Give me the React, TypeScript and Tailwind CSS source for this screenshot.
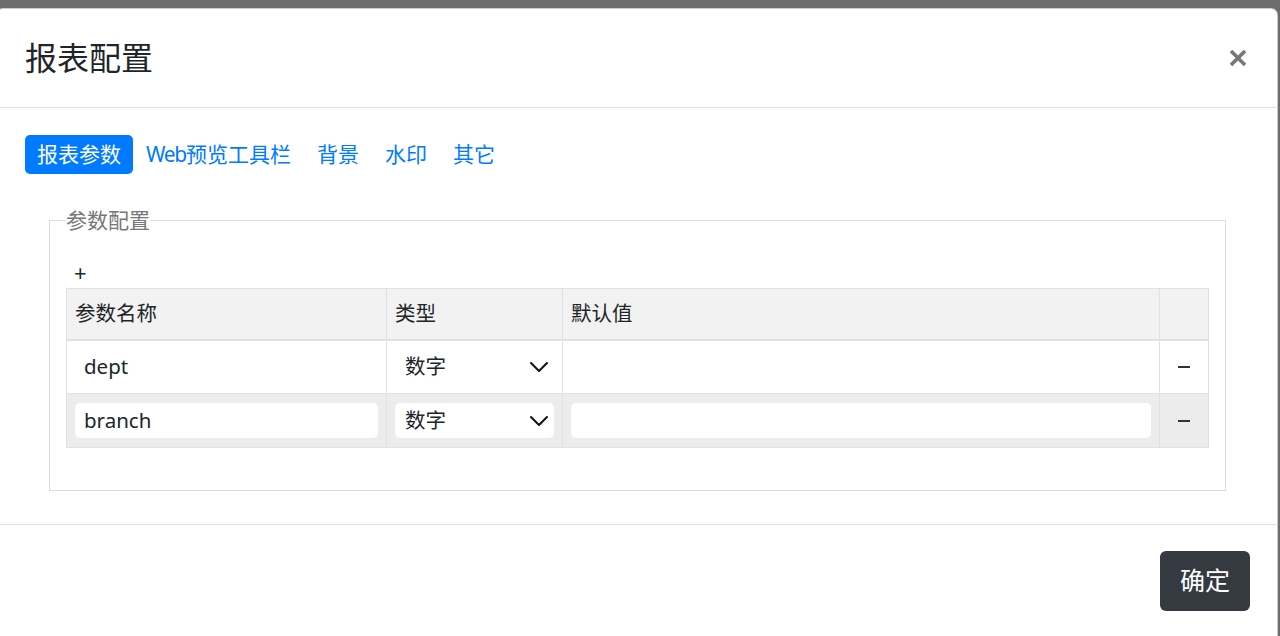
import React from "react";

const Chevron = () => (
  <svg width="20" height="12" viewBox="0 0 20 12" fill="none">
    <polyline points="2,2 10,10 18,2" stroke="#111" strokeWidth="2" strokeLinecap="round" strokeLinejoin="round" />
  </svg>
);

const SelectBox = ({ bg }: { bg: string }) => (
  <div className={`flex h-[35px] items-center justify-between rounded-[5px] pl-[10px] pr-[5px] ${bg}`}>
    <span>数字</span>
    <Chevron />
  </div>
);

const Minus = () => (
  <div className="flex items-center justify-center">
    <div className="h-[2px] w-[12px] bg-[#333]"></div>
  </div>
);

export default function App() {
  const font = { fontFamily: '"Noto Sans", "Noto Sans CJK SC", sans-serif' };
  return (
    <div className="h-[636px] overflow-hidden bg-[#6c6c6c] pt-[8px]" style={font}>
      <div className="ml-[-4px] flex h-[640px] w-[1282px] flex-col rounded-[7px] border border-black/20 bg-white text-[#212529]">
        {/* header */}
        <div className="flex h-[99px] shrink-0 items-center justify-between border-b border-[#dee2e6] pl-[28px] pr-[30px]">
          <div className="text-[32px] leading-none">报表配置</div>
          <svg width="18" height="18" viewBox="0 0 18 18">
            <path d="M2 2 L16 16 M16 2 L2 16" stroke="#777" strokeWidth="3.6" strokeLinecap="butt" />
          </svg>
        </div>
        {/* body */}
        <div className="h-[417px] shrink-0 border-b border-[#dee2e6] pl-[28px] pr-[51px] pt-[27px]">
          <div className="flex items-center text-[21px]">
            <div className="flex h-[39px] items-center rounded-[5px] bg-[#007bff] px-[12px] text-white">报表参数</div>
            <div className="flex h-[39px] items-center px-[13px] text-[#007bff]">
              <span className="tracking-[-1.3px]">Web</span>
              <span>预览工具栏</span>
            </div>
            <div className="flex h-[39px] items-center px-[13px] text-[#007bff]">背景</div>
            <div className="flex h-[39px] items-center px-[13px] text-[#007bff]">水印</div>
            <div className="flex h-[39px] items-center px-[13px] text-[#007bff]">其它</div>
          </div>
          <fieldset className="ml-[24px] mt-[31px] border border-[#dddddd] px-[16px] pb-[42px]">
            <legend className="text-[21px] leading-[31px] text-[#777]">参数配置</legend>
            <div className="mt-[20px] flex h-[32px] items-center pl-[8px] text-[22px] leading-none">+</div>
            <table className="w-full border-collapse text-[20.5px]">
              <thead>
                <tr className="h-[51px] bg-[#f2f2f2]">
                  <th className="w-[320px] border border-b-2 border-[#dee2e6] px-[8px] text-left font-normal">参数名称</th>
                  <th className="w-[176px] border border-b-2 border-[#dee2e6] px-[8px] text-left font-normal">类型</th>
                  <th className="border border-b-2 border-[#dee2e6] px-[8px] text-left font-normal">默认值</th>
                  <th className="w-[49px] border border-b-2 border-[#dee2e6]"></th>
                </tr>
              </thead>
              <tbody>
                <tr className="h-[54px] bg-white">
                  <td className="border border-[#dee2e6] px-[8px]">
                    <div className="flex h-[35px] items-center rounded-[5px] bg-white pl-[9px]">dept</div>
                  </td>
                  <td className="border border-[#dee2e6] px-[8px]">
                    <SelectBox bg="bg-white" />
                  </td>
                  <td className="border border-[#dee2e6] px-[8px]">
                    <div className="h-[35px] rounded-[5px] bg-white"></div>
                  </td>
                  <td className="border border-[#dee2e6]">
                    <Minus />
                  </td>
                </tr>
                <tr className="h-[54px] bg-[#ececec]">
                  <td className="border border-[#dee2e6] px-[8px]">
                    <div className="flex h-[35px] items-center rounded-[5px] bg-white pl-[9px]">branch</div>
                  </td>
                  <td className="border border-[#dee2e6] px-[8px]">
                    <SelectBox bg="bg-white" />
                  </td>
                  <td className="border border-[#dee2e6] px-[8px]">
                    <div className="h-[35px] rounded-[5px] bg-white"></div>
                  </td>
                  <td className="border border-[#dee2e6]">
                    <Minus />
                  </td>
                </tr>
              </tbody>
            </table>
          </fieldset>
        </div>
        {/* footer */}
        <div className="flex justify-end pr-[27px] pt-[26px]">
          <div className="flex h-[60px] w-[90px] items-center justify-center rounded-[6px] bg-[#343a40] text-[25px] text-white">确定</div>
        </div>
      </div>
    </div>
  );
}
